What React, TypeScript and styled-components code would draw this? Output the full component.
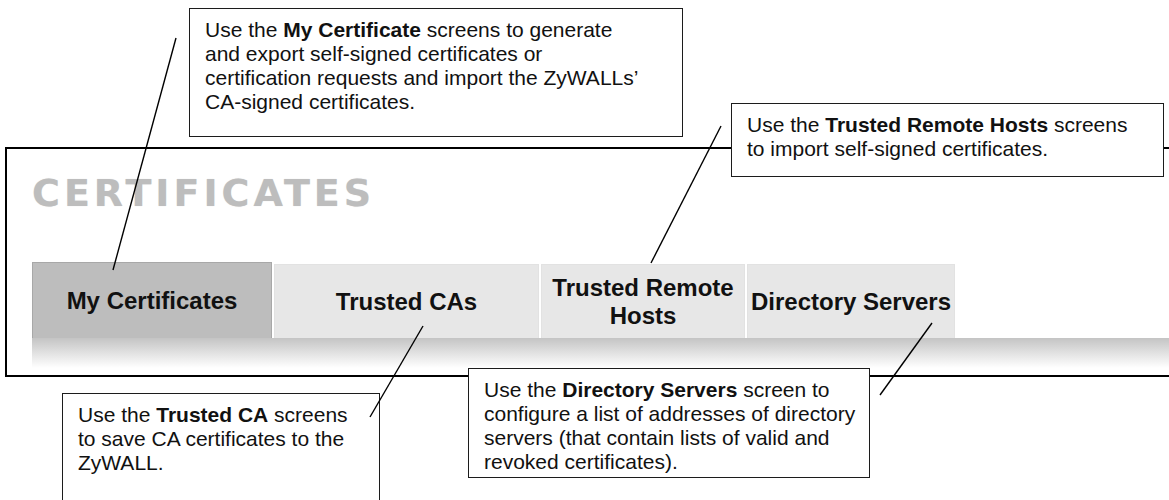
import styled, { createGlobalStyle } from "styled-components"

const GlobalStyle = createGlobalStyle`
    html, body {
        margin: 0;
        padding: 0;
        background: #ffffff;
    }
`;

const Page = styled.div`
    position: relative;
    width: 1169px;
    height: 500px;
    overflow: hidden;
    box-sizing: border-box;
    padding: 147px 0 0 5px;
    background: #ffffff;
    font-family: "Liberation Sans", Arial, sans-serif;
`;

const Frame = styled.div`
    width: 1200px;
    height: 230px;
    box-sizing: border-box;
    border: 2px solid #000000;
    padding: 25px 0 0 25px;
`;

const Title = styled.div`
    font-family: "DejaVu Sans", "Liberation Sans", sans-serif;
    font-weight: bold;
    font-size: 38px;
    line-height: 38px;
    letter-spacing: 4px;
    color: #bdbdbd;
    text-shadow: 0 0 1px #d6d6d6;
`;

const TabBar = styled.div`
    display: flex;
    align-items: flex-end;
    gap: 2px;
    height: 76px;
    margin-top: 50px;
`;

type TabProps = {
    $w: number
    $active?: boolean
}
const Tab = styled.div<TabProps>`
    width: ${props => props.$w}px;
    height: ${props => props.$active ? 76 : 74}px;
    box-sizing: border-box;
    display: flex;
    align-items: center;
    justify-content: center;
    text-align: center;
    white-space: nowrap;
    background: ${props => props.$active ? "#bdbdbd" : "#e7e7e7"};
    border: 1px solid ${props => props.$active ? "#a8a8a8" : "#e2e2e2"};
    border-bottom: none;
    font-family: "Liberation Sans", Arial, sans-serif;
    font-weight: bold;
    font-size: 24px;
    line-height: 28px;
    color: #111111;
`;

const Band = styled.div`
    height: 30px;
    background: linear-gradient(#c4c4c4, #ffffff);
`;

type ICallout = {
    $x: number
    $y: number
    $w: number
    $h: number
}
const Callout = styled.div<ICallout>`
    position: absolute;
    left: ${props => props.$x}px;
    top: ${props => props.$y}px;
    width: ${props => props.$w}px;
    height: ${props => props.$h}px;
    box-sizing: border-box;
    padding: 9px 15px;
    border: 1.5px solid #1c1c1c;
    background: #ffffff;
    font-family: "Liberation Sans", Arial, sans-serif;
    font-size: 21px;
    line-height: 24px;
    color: #111111;
    white-space: nowrap;

    b {
        font-weight: bold;
    }
`;

const Leaders = styled.svg`
    position: absolute;
    left: 0;
    top: 0;
    pointer-events: none;
`;

const lines = [
    [176, 38, 113, 270],
    [721, 126, 651, 263],
    [423, 326, 370, 417],
    [932, 323, 880, 395],
];

export default function App() {
    return (
        <>
            <GlobalStyle />
            <Page>
                <Frame>
                    <Title>CERTIFICATES</Title>
                    <TabBar>
                        <Tab $w={240} $active>My Certificates</Tab>
                        <Tab $w={265}>Trusted CAs</Tab>
                        <Tab $w={204}>Trusted Remote<br />Hosts</Tab>
                        <Tab $w={208}>Directory Servers</Tab>
                    </TabBar>
                    <Band />
                </Frame>

                <Callout $x={189} $y={8} $w={494} $h={129}>
                    Use the <b>My Certificate</b> screens to generate<br />
                    and export self-signed certificates or<br />
                    certification requests and import the ZyWALLs’<br />
                    CA-signed certificates.
                </Callout>
                <Callout $x={731} $y={103} $w={433} $h={74}>
                    Use the <b>Trusted Remote Hosts</b> screens<br />
                    to import self-signed certificates.
                </Callout>
                <Callout $x={62} $y={393} $w={318} $h={130}>
                    Use the <b>Trusted CA</b> screens<br />
                    to save CA certificates to the<br />
                    ZyWALL.
                </Callout>
                <Callout $x={468} $y={368} $w={402} $h={110}>
                    Use the <b>Directory Servers</b> screen to<br />
                    configure a list of addresses of directory<br />
                    servers (that contain lists of valid and<br />
                    revoked certificates).
                </Callout>

                <Leaders width={1169} height={500}>
                    {lines.map(([x1, y1, x2, y2], i) => (
                        <line key={i} x1={x1} y1={y1} x2={x2} y2={y2} stroke="#000" strokeWidth={1.4} />
                    ))}
                </Leaders>
            </Page>
        </>
    );
}
